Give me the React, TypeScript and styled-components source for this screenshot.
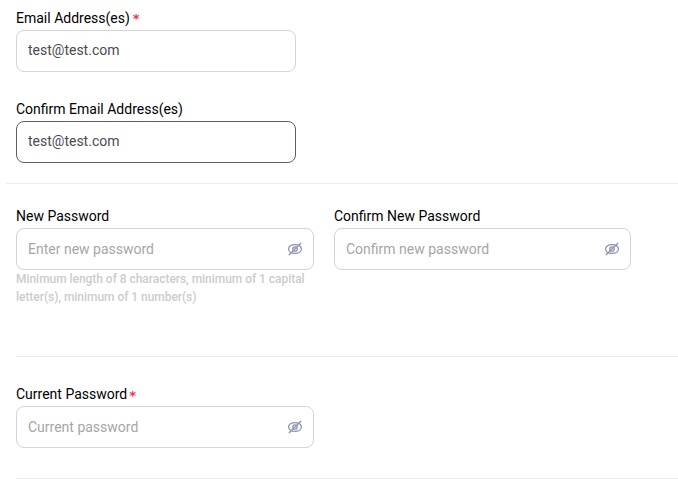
import React from 'react';
import styled, { createGlobalStyle } from 'styled-components';

const GlobalStyle = createGlobalStyle`
  *, *::before, *::after { box-sizing: border-box; }
  body {
    margin: 0;
    background: #fff;
    font-family: Roboto, "Liberation Sans", sans-serif;
    overflow: hidden;
  }
`;

const Form = styled.form`
  display: flex;
  flex-direction: column;
  width: 100%;
  height: 501px;
  padding-top: 8px;
`;

const Section = styled.section<{ $height: number; $top?: number }>`
  display: flex;
  flex-direction: column;
  gap: 27px;
  height: ${({ $height }) => $height}px;
  padding: ${({ $top = 0 }) => $top}px 0 0 16px;
`;

const PasswordRow = styled.div`
  display: grid;
  grid-template-columns: 298px 297px;
  column-gap: 20px;
`;

const Divider = styled.hr<{ $inset: number; $color: string }>`
  flex: none;
  height: 1px;
  margin: 0 0 0 ${({ $inset }) => $inset}px;
  border: 0;
  background: ${({ $color }) => $color};
`;

const FieldGroup = styled.div<{ $width?: number }>`
  display: flex;
  flex-direction: column;
  width: ${({ $width }) => ($width ? `${$width}px` : '100%')};
`;

const Label = styled.label`
  height: 22px;
  font-size: 14px;
  line-height: 20px;
  color: #000;
  white-space: nowrap;
`;

const Required = styled.span<{ $password?: boolean }>`
  margin-left: ${({ $password }) => ($password ? 2 : 3)}px;
  font-family: "DejaVu Sans", sans-serif;
  font-size: 13px;
  font-weight: 700;
  line-height: 1;
  vertical-align: ${({ $password }) => ($password ? -1 : 0)}px;
  color: #f5304c;
`;

const InputBox = styled.div<{ $active?: boolean }>`
  display: flex;
  align-items: center;
  height: 42px;
  padding: 0 11px;
  border: 1px solid ${({ $active }) => ($active ? '#5f5f62' : '#d3d3da')};
  border-radius: 8px;
  background: #fff;
`;

const Input = styled.input`
  flex: 1;
  min-width: 0;
  height: 38px;
  padding: 0;
  border: 0;
  outline: 0;
  background: transparent;
  font: 400 14px/20px Roboto, "Liberation Sans", sans-serif;
  color: #4b4b4f;

  &[type='text'] {
    padding-bottom: 2px;
  }

  &::placeholder {
    color: #a6a6a6;
    opacity: 1;
  }
`;

const ToggleIcon = styled.svg`
  flex: none;
  width: 16px;
  height: 16px;
  margin-right: -1px;
`;

const Hint = styled.p`
  width: 298px;
  margin: 0;
  font-size: 12px;
  line-height: 18px;
  font-weight: 500;
  letter-spacing: -0.04px;
  color: #cccccc;
`;

function HiddenEye() {
  return (
    <ToggleIcon viewBox="0 0 16 16" fill="none" stroke="#8f92b4" aria-hidden="true">
      <path d="M1.5 8C1.9 5.3 4.5 3.6 8 3.6S14.1 5.3 14.5 8C14.1 10.7 11.5 12.4 8 12.4S1.9 10.7 1.5 8Z" strokeWidth="1.3" />
      <circle cx="8" cy="8" r="2.2" strokeWidth="1.3" />
      <path d="M2.2 13.8 13.8 2.2" strokeWidth="1.3" strokeLinecap="round" />
    </ToggleIcon>
  );
}

interface FieldProps {
  id: string;
  label: string;
  value?: string;
  placeholder?: string;
  required?: boolean;
  active?: boolean;
  password?: boolean;
  width?: number;
  hint?: string;
}

function Field({ id, label, value, placeholder, required, active, password, width, hint }: FieldProps) {
  return (
    <FieldGroup $width={width}>
      <Label htmlFor={id}>
        {label}
        {required && <Required $password={password}>*</Required>}
      </Label>
      <InputBox $active={active}>
        <Input id={id} type={password ? 'password' : 'text'} defaultValue={value} placeholder={placeholder} />
        {password && <HiddenEye />}
      </InputBox>
      {hint && <Hint>{hint}</Hint>}
    </FieldGroup>
  );
}

export default function App() {
  return (
    <>
      <GlobalStyle />
      <Form>
        <Section $height={175}>
          <Field id="email" label="Email Address(es)" value="test@test.com" width={280} required />
          <Field id="confirm-email" label="Confirm Email Address(es)" value="test@test.com" width={280} active />
        </Section>
        <Divider $inset={6} $color="#ececec" />
        <Section $height={172} $top={22}>
          <PasswordRow>
            <Field
              id="new-password"
              label="New Password"
              placeholder="Enter new password"
              hint="Minimum length of 8 characters, minimum of 1 capital letter(s), minimum of 1 number(s)"
              password
            />
            <Field id="confirm-password" label="Confirm New Password" placeholder="Confirm new password" password />
          </PasswordRow>
        </Section>
        <Divider $inset={16} $color="#ebebf2" />
        <Section $height={121} $top={27}>
          <Field id="current-password" label="Current Password" placeholder="Current password" width={298} required password />
        </Section>
        <Divider $inset={16} $color="#ebebf2" />
      </Form>
    </>
  );
}
